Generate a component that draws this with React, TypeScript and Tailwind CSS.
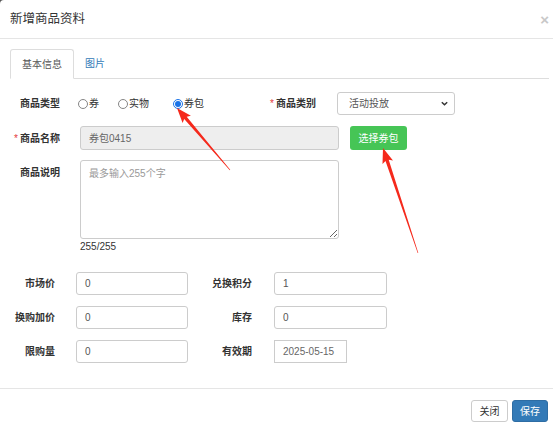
import React from 'react'

function arrowPoints(x1: number, y1: number, x2: number, y2: number) {
  const dx = x2 - x1
  const dy = y2 - y1
  const len = Math.hypot(dx, dy)
  const ux = dx / len
  const uy = dy / len
  const nx = -uy
  const ny = ux
  const headLen = 13
  const headW = 5.5
  const bx = x2 - ux * headLen
  const by = y2 - uy * headLen
  const p = (x: number, y: number, w: number) => `${(x + nx * w).toFixed(1)},${(y + ny * w).toFixed(1)}`
  return [
    p(x1, y1, 0.3),
    p(bx, by, 1.7),
    p(bx - ux * 2, by - uy * 2, headW),
    `${x2},${y2}`,
    p(bx - ux * 2, by - uy * 2, -headW),
    p(bx, by, -1.7),
    p(x1, y1, -0.3),
  ].join(' ')
}

function Radio({ label, checked, className }: { label: string; checked?: boolean; className?: string }) {
  return (
    <label className={`flex items-center ${className ?? ''}`}>
      {checked ? (
        <span className="w-[10px] h-[10px] rounded-full border border-[#1a73e8] bg-white flex items-center justify-center">
          <span className="w-[6px] h-[6px] rounded-full bg-[#1a73e8]" />
        </span>
      ) : (
        <span className="w-[10px] h-[10px] rounded-full border border-[#858585] bg-white" />
      )}
      <span className="ml-[1px] text-[10px] text-[#333]">{label}</span>
    </label>
  )
}

function Field({ value, className }: { value: string; className?: string }) {
  return (
    <div className={`h-[23px] border border-[#ccc] rounded-[3px] bg-white px-[8px] flex items-center text-[10px] text-[#555] ${className ?? ''}`}>
      {value}
    </div>
  )
}

function Label({ text, className, star }: { text: string; className?: string; star?: boolean }) {
  return (
    <div className={`text-right text-[10px] font-bold text-[#333] ${className ?? ''}`}>
      {star && <span className="text-[#e4393c] font-normal mr-[2px]">*</span>}
      {text}
    </div>
  )
}

export default function App() {
  return (
    <div className="w-[553px] h-[432px] overflow-hidden bg-[#555] font-['Liberation_Sans','Noto_Sans_CJK_SC',sans-serif]">
      <div className="relative w-[559px] h-[432px] bg-white rounded-tl-[4px] flex flex-col">
        {/* Header */}
        <div className="h-[39px] border-b border-[#e5e5e5] flex items-center justify-between pl-[10px] pr-[10px] shrink-0">
          <span className="text-[12.5px] text-[#333]">新增商品资料</span>
          <span className="text-[15px] font-bold leading-none text-[#c8c8c8]">×</span>
        </div>

        {/* Body */}
        <div className="pl-[10px] pr-[10px] pt-[10px]">
          <div className="flex border-b border-[#ddd] h-[30px]">
            <div className="w-[64px] h-[30px] border border-[#ddd] border-b-white rounded-t-[3px] bg-white flex items-center justify-center text-[10px] text-[#555]">
              基本信息
            </div>
            <div className="pl-[11px] h-[29px] flex items-center text-[10px] text-[#337ab7]">图片</div>
          </div>

          {/* Row 1 */}
          <div className="flex items-center h-[23px] mt-[13px]">
            <Label text="商品类型" className="w-[50px]" />
            <div className="w-[192px] ml-[18px] flex items-center">
              <Radio label="券" className="w-[40px]" />
              <Radio label="实物" className="w-[55px]" />
              <Radio label="券包" checked />
            </div>
            <Label text="商品类别" star className="w-[46px]" />
            <div className="ml-[21px] w-[118px] h-[23px] border border-[#ccc] rounded-[3px] bg-white flex items-center justify-between pl-[11px] pr-[5px] text-[10px] text-[#555]">
              活动投放
              <svg width="9" height="9" viewBox="0 0 10 10" fill="none" stroke="#333" strokeWidth="1.6">
                <path d="M2 3.5 L5 6.5 L8 3.5" />
              </svg>
            </div>
          </div>

          {/* Row 2 */}
          <div className="flex items-center h-[24px] mt-[11px]">
            <Label text="商品名称" star className="w-[50px]" />
            <div className="ml-[20px] w-[259px] h-[24px] border border-[#ccc] rounded-[3px] bg-[#eee] px-[8px] flex items-center text-[10px] text-[#666]">
              券包0415
            </div>
            <div className="ml-[11px] w-[57px] h-[24px] rounded-[3px] bg-[#46c556] flex items-center justify-center text-[10px] text-white">
              选择券包
            </div>
          </div>

          {/* Row 3 */}
          <div className="flex mt-[10px]">
            <Label text="商品说明" className="w-[50px] pt-[5px]" />
            <div className="ml-[20px] w-[259px]">
              <textarea
                placeholder="最多输入255个字"
                className="block w-[259px] h-[79px] border border-[#ccc] rounded-[3px] px-[8px] py-[5px] text-[10px] text-[#555] placeholder:text-[#999] outline-none"
              />
              <div className="text-[10px] leading-[13px] text-[#333] mt-[1px]">255/255</div>
            </div>
          </div>

          {/* Rows 4-6 */}
          <div className="flex flex-col gap-[11px] mt-[19px]">
            <div className="flex items-center">
              <Label text="市场价" className="w-[45px]" />
              <Field value="0" className="ml-[21px] w-[112px]" />
              <Label text="兑换积分" className="w-[64px]" />
              <Field value="1" className="ml-[22px] w-[113px]" />
            </div>
            <div className="flex items-center">
              <Label text="换购加价" className="w-[45px]" />
              <Field value="0" className="ml-[21px] w-[112px]" />
              <Label text="库存" className="w-[64px]" />
              <Field value="0" className="ml-[22px] w-[113px]" />
            </div>
            <div className="flex items-center">
              <Label text="限购量" className="w-[45px]" />
              <Field value="0" className="ml-[21px] w-[112px]" />
              <Label text="有效期" className="w-[64px]" />
              <div className="ml-[22px] w-[73px] h-[23px] border border-[#ccc] bg-white px-[8px] flex items-center text-[10px] text-[#666]">
                2025-05-15
              </div>
            </div>
          </div>
        </div>

        {/* Footer */}
        <div className="mt-auto border-t border-[#e5e5e5] h-[44px] flex items-start justify-end gap-[4px] pt-[11px] pr-[11px]">
          <div className="w-[37px] h-[22px] border border-[#ccc] rounded-[3px] bg-white flex items-center justify-center text-[10px] text-[#333]">
            关闭
          </div>
          <div className="w-[36px] h-[22px] border border-[#2e6da4] rounded-[3px] bg-[#337ab7] flex items-center justify-center text-[10px] text-white">
            保存
          </div>
        </div>

        {/* Annotation arrows */}
        <svg className="absolute left-0 top-0 pointer-events-none" width="559" height="432">
          <polygon points={arrowPoints(230, 170, 177, 108)} fill="#f5291c" />
          <polygon points={arrowPoints(418, 253, 383, 148)} fill="#f5291c" />
        </svg>
      </div>
    </div>
  )
}
